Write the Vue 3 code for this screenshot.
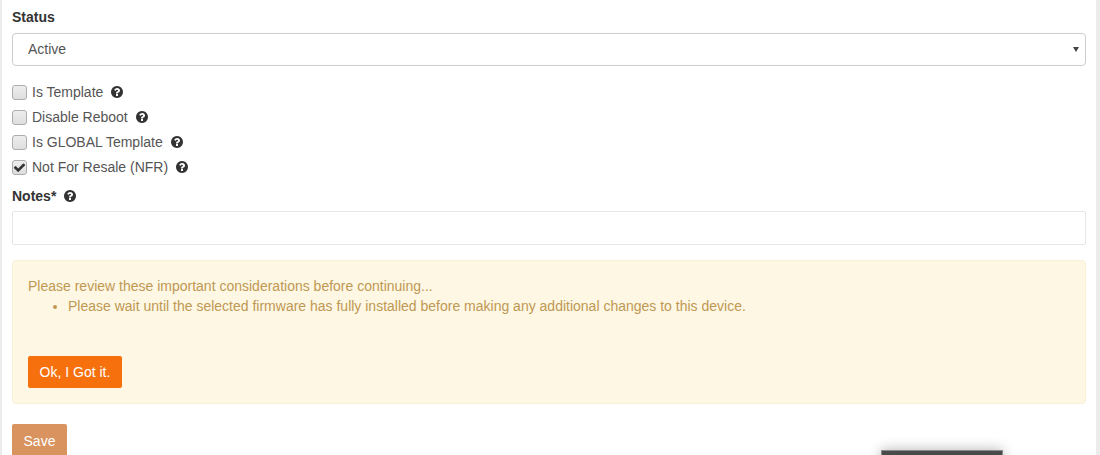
<template>
  <div class="page">
    <form class="panel" @submit.prevent>
      <div class="field">
        <label class="field-label">Status</label>
        <div class="select-wrap">
          <select class="control select" v-model="status">
            <option>Active</option>
            <option>Inactive</option>
          </select>
          <span class="caret"></span>
        </div>
      </div>

      <div class="checks">
        <label v-for="item in checks" :key="item.label" class="check">
          <input v-model="item.on" type="checkbox" />
          <svg v-if="item.on" class="tick" viewBox="0 0 1792 1792"><path d="M1671 566q0 40-28 68l-724 724-136 136q-28 28-68 28t-68-28l-136-136-362-362q-28-28-28-68t28-68l136-136q28-28 68-28t68 28l294 295 656-657q28-28 68-28t68 28l136 136q28 28 28 68z" /></svg>
          <span>{{ item.label }}</span>
          <svg class="help" viewBox="0 0 1792 1792"><path :d="helpPath" /></svg>
        </label>
      </div>

      <div class="field notes">
        <label class="field-label">Notes* <svg class="help" viewBox="0 0 1792 1792"><path :d="helpPath" /></svg></label>
        <input class="control input" type="text" />
      </div>

      <div class="notice">
        <p>Please review these important considerations before continuing...</p>
        <ul>
          <li>Please wait until the selected firmware has fully installed before making any additional changes to this device.</li>
        </ul>
        <button class="btn got-it" type="button">Ok, I Got it.</button>
      </div>

      <button class="btn save" type="submit">Save</button>
    </form>
    <div class="floating"></div>
  </div>
</template>

<script setup>
import { ref, reactive } from 'vue'

const status = ref('Active')

const checks = reactive([
  { label: 'Is Template', on: false },
  { label: 'Disable Reboot', on: false },
  { label: 'Is GLOBAL Template', on: false },
  { label: 'Not For Resale (NFR)', on: true }
])

const helpPath = 'M1024 1376v-192q0-14-9-23t-23-9h-192q-14 0-23 9t-9 23v192q0 14 9 23t23 9h192q14 0 23-9t9-23zm256-672q0-88-55.500-163t-138.500-116-170-41q-243 0-371 213-15 24 8 42l132 100q7 6 19 6 16 0 25-12 53-68 86-92 34-24 86-24 48 0 85.500 26t37.500 59q0 38-20 61t-68 45q-63 28-115.500 86.500t-52.500 125.500v36q0 14 9 23t23 9h192q14 0 23-9t9-23q0-19 21.500-49.500t54.500-49.500q32-18 49-28.500t46-35 44.500-48 28-60.500 12.500-81zm384 192q0 209-103 385.500t-279.500 279.500-385.500 103-385.500-103-279.500-279.500-103-385.500 103-385.500 279.500-279.500 385.500-103 385.500 103 279.500 279.500 103 385.500z'
</script>

<style>
html, body {
  margin: 0;
  overflow: hidden;
  background: #f0f0f0;
}
</style>

<style scoped>
.page {
  position: relative;
  width: 1100px;
  height: 455px;
  overflow: hidden;
  font-family: 'Liberation Sans', Arial, sans-serif;
  font-size: 14px;
  color: #555;
  background: #ececec;
}
.panel {
  box-sizing: border-box;
  width: 1094px;
  height: 455px;
  margin-left: 2px;
  padding: 10px 10px 0;
  background: #fff;
}
.field-label {
  display: block;
  height: 20px;
  line-height: 15px;
  font-size: 14px;
  font-weight: 700;
  color: #333;
}
.field-label .help {
  margin-left: 3px;
  vertical-align: -2px;
}
.control {
  box-sizing: border-box;
  display: block;
  width: 100%;
  border: 1px solid #ccc;
  border-radius: 4px;
  background: #fff;
  font: inherit;
  color: #555;
  outline: none;
}
.select-wrap {
  position: relative;
  margin-top: 3px;
}
.select {
  appearance: none;
  height: 33px;
  padding: 0 15px 2px;
}
.caret {
  position: absolute;
  top: 14px;
  right: 7px;
  border-left: 3px solid transparent;
  border-right: 3px solid transparent;
  border-top: 5px solid #444;
  pointer-events: none;
}
.checks {
  display: flex;
  flex-direction: column;
  margin-top: 13px;
}
.check {
  position: relative;
  display: flex;
  align-items: center;
  height: 25px;
}
.check input {
  appearance: none;
  box-sizing: border-box;
  width: 15px;
  height: 15px;
  margin: 2px 5px 0 0;
  border: 1px solid #adadad;
  border-radius: 3px;
  background: linear-gradient(#ededed, #dedede);
}
.tick {
  position: absolute;
  left: 1px;
  top: 7px;
  width: 13px;
  height: 13px;
  fill: #333;
}
.help {
  width: 14px;
  height: 14px;
  fill: #333;
}
.check .help {
  margin-left: 7px;
}
.notes {
  margin-top: 10px;
}
.input {
  height: 34px;
  margin-top: 2px;
  border-color: #e5e6e7;
  border-radius: 2px;
}
.notice {
  box-sizing: border-box;
  height: 144px;
  margin-top: 15px;
  padding: 15px;
  background: #fdf7e3;
  border: 1px solid #faf0d7;
  border-radius: 4px;
  color: #c09853;
  line-height: 20px;
}
.notice p {
  margin: 0;
}
.notice ul {
  margin: 0;
  padding-left: 40px;
}
.btn {
  display: block;
  border: 0;
  border-radius: 2px;
  font: inherit;
  color: #fff;
}
.got-it {
  width: 94px;
  height: 32px;
  margin-top: 40px;
  background: #f7700e;
}
.save {
  width: 55px;
  height: 34px;
  margin-top: 20px;
  background: #d9935e;
}
.floating {
  position: absolute;
  left: 881px;
  top: 450px;
  width: 120px;
  height: 40px;
  background: #4a4a4a;
  border: 1px solid #8a8a8a;
  box-shadow: 0 0 12px rgba(0, 0, 0, 0.3);
}
</style>
